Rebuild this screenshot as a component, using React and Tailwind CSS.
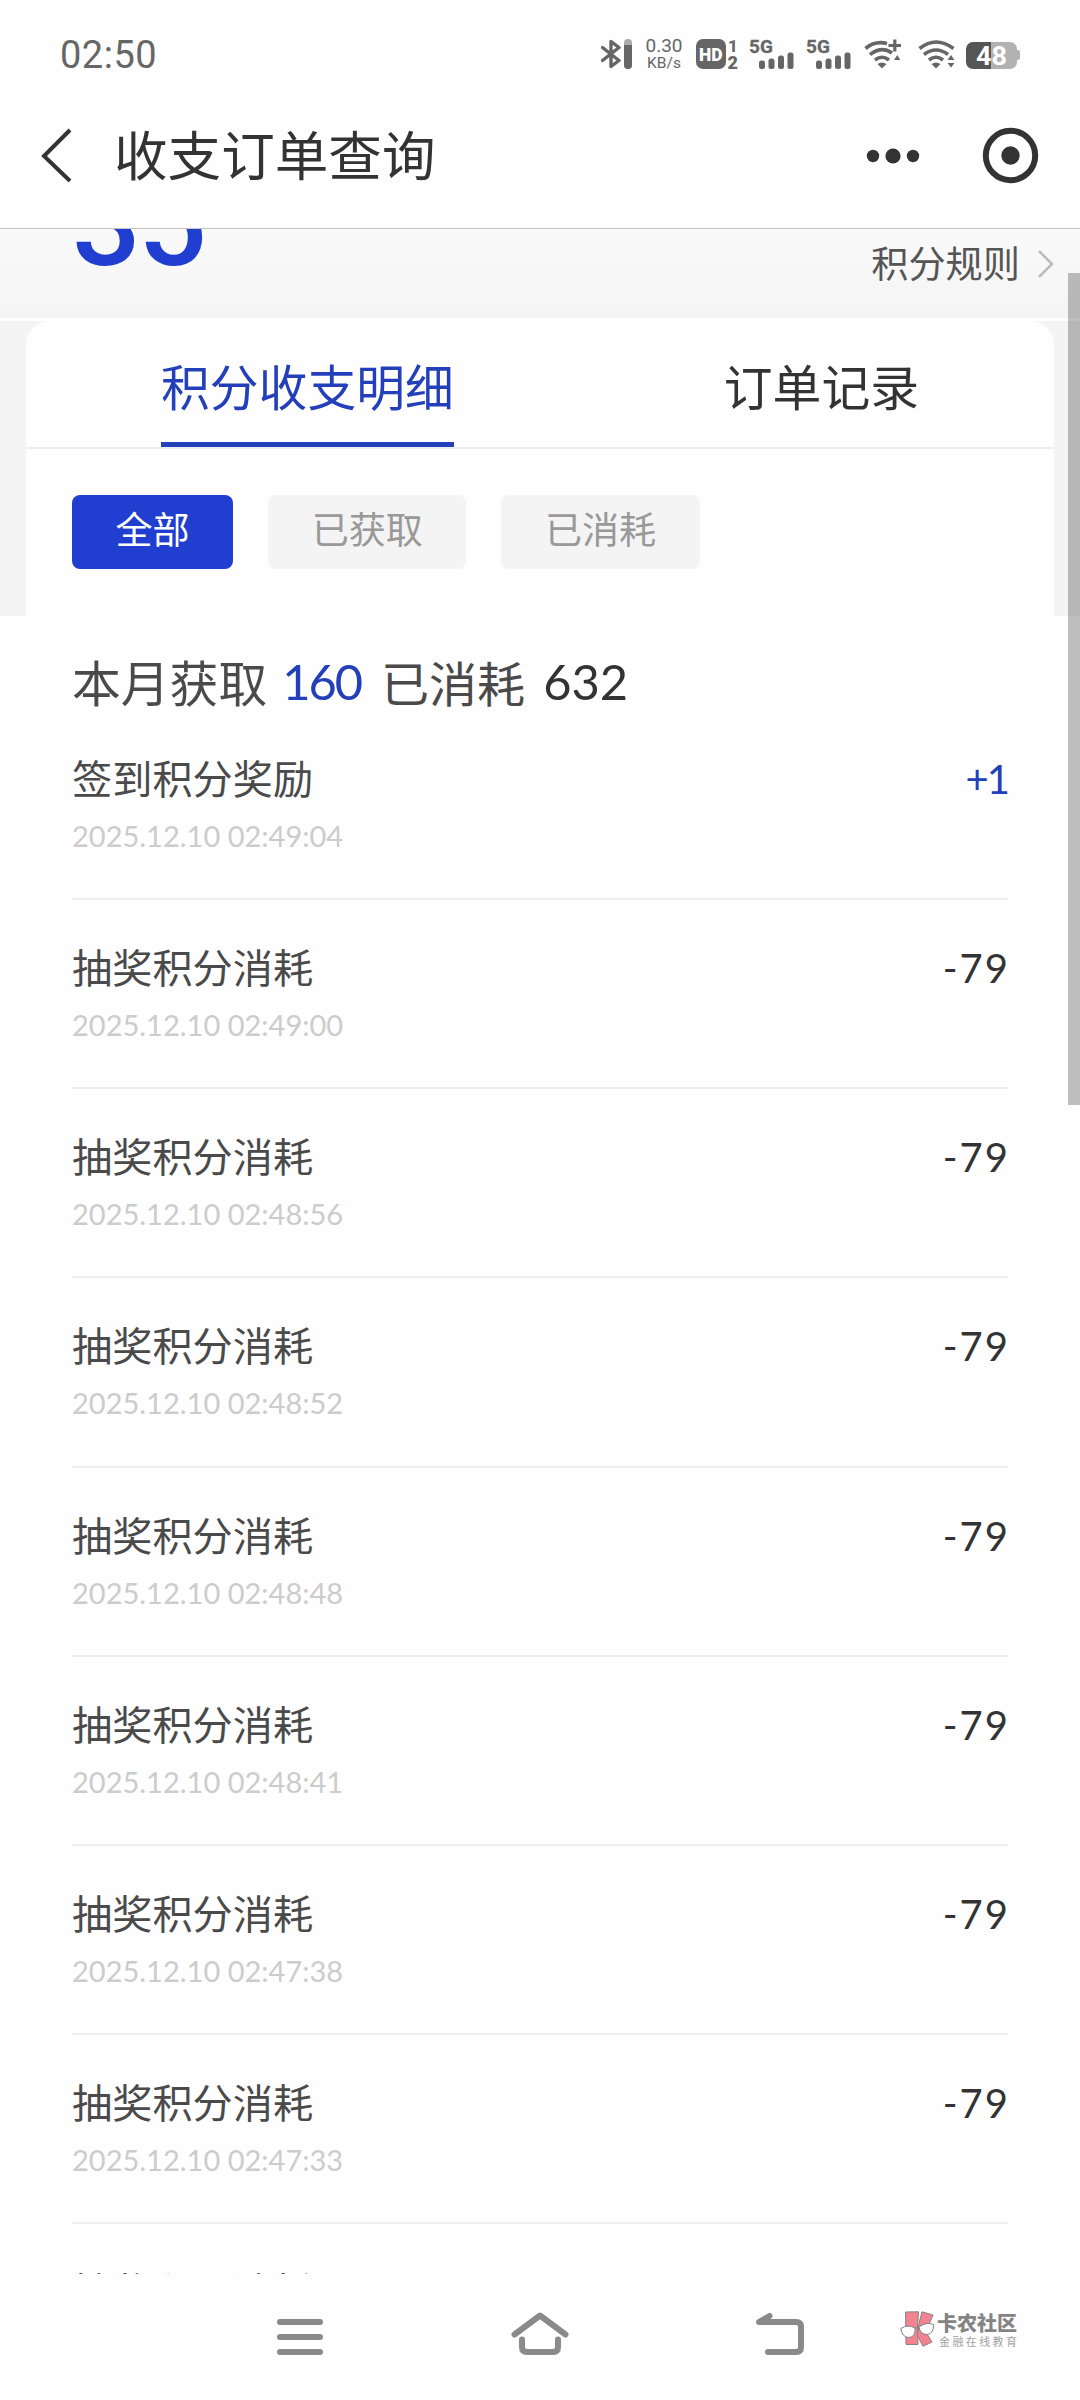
import React, { useState } from "react";

const records = [
  { id: 1, title: "签到积分奖励", time: "2025.12.10 02:49:04", amount: "+1" },
  { id: 2, title: "抽奖积分消耗", time: "2025.12.10 02:49:00", amount: "-79" },
  { id: 3, title: "抽奖积分消耗", time: "2025.12.10 02:48:56", amount: "-79" },
  { id: 4, title: "抽奖积分消耗", time: "2025.12.10 02:48:52", amount: "-79" },
  { id: 5, title: "抽奖积分消耗", time: "2025.12.10 02:48:48", amount: "-79" },
  { id: 6, title: "抽奖积分消耗", time: "2025.12.10 02:48:41", amount: "-79" },
  { id: 7, title: "抽奖积分消耗", time: "2025.12.10 02:47:38", amount: "-79" },
  { id: 8, title: "抽奖积分消耗", time: "2025.12.10 02:47:33", amount: "-79" },
  { id: 9, title: "抽奖积分消耗", time: "", amount: "" },
];

const tabs = ["积分收支明细", "订单记录"];
const filters = ["全部", "已获取", "已消耗"];

const Signal = () => (
  <svg className="overflow-visible" width="46" height="30" viewBox="0 0 46 30" fill="#666">
    <text x="0" y="14" fontSize="19" fontWeight="700" fontFamily="Roboto" textLength="24" stroke="#666" strokeWidth="0.3">
      5G
    </text>
    <rect x="10" y="21.5" width="6" height="8.5" rx="2.5" />
    <rect x="19.5" y="19.5" width="6" height="10.5" rx="2.5" />
    <rect x="29" y="16.5" width="6" height="13.5" rx="2.5" />
    <rect x="38.5" y="13.5" width="6" height="16.5" rx="2.5" />
  </svg>
);

const StatusBar = () => (
  <div className="h-[108px] flex items-center justify-between pl-[60px] pr-[60px] text-[#666]">
    <span className="pt-[2px] text-[38px] leading-none font-['Roboto'] tracking-[0.5px]">
      02:50
    </span>
    <div className="flex items-center">
      <svg width="31" height="30" viewBox="0 0 31 30">
        <path
          d="M1.5 8.5 L18 21.5 L10 27.5 V2.5 L18 8.5 L1.5 21.5"
          fill="none"
          stroke="#666"
          strokeWidth="3.4"
          strokeLinejoin="round"
          strokeLinecap="round"
        />
        <rect x="23" y="0" width="8" height="30" rx="4" fill="#aaa" />
        <path d="M23 6 H31 V26 A4 4 0 0 1 23 26 Z" fill="#666" />
      </svg>
      <div className="ml-[13px] w-[38px] h-[32px] flex flex-col items-center justify-between font-['Roboto'] whitespace-nowrap">
        <span className="text-[19px] leading-[16px]">0.30</span>
        <span className="text-[15.5px] leading-[13px]">KB/s</span>
      </div>
      <svg className="ml-[13px] overflow-visible" width="44" height="30" viewBox="0 0 44 30">
        <rect width="30" height="30" rx="7" fill="#666" />
        <text x="3" y="22" fontSize="19" fontWeight="900" fontFamily="Roboto" fill="#fff" textLength="23.5" lengthAdjust="spacingAndGlyphs">
          HD
        </text>
        <text x="32" y="12.5" fontSize="17" fontWeight="800" fontFamily="Roboto" fill="#666">
          1
        </text>
        <text x="31.5" y="30" fontSize="18" fontWeight="900" fontFamily="Roboto" fill="#666">
          2
        </text>
      </svg>
      <div className="ml-[9px] flex gap-[11px]">
        <Signal />
        <Signal />
      </div>
      <svg className="ml-3" width="38" height="30" viewBox="0 0 38 30" fill="none" stroke="#666" strokeWidth="3.6">
        <path d="M1.5 9.5 Q11 1.5 23 4.5" />
        <path d="M6 15.5 Q18 6.5 28 14" />
        <path d="M11 21 Q18 15.5 25 21" />
        <path d="M13.5 25 Q18 22 22.5 25 L18 29.5 Z" fill="#666" stroke="none" />
        <path d="M24.5 6.5 H37 M30.8 0.5 V12.5" strokeWidth="3.2" />
        <path d="M30 21 L33.2 16 L36.4 21 Z" fill="#666" stroke="none" />
      </svg>
      <svg className="ml-4" width="38" height="30" viewBox="0 0 38 30" fill="none" stroke="#666" strokeWidth="3.6">
        <path d="M1.5 9.5 Q18 -3.5 35.5 9.5" />
        <path d="M6 15.5 Q18 6.5 30 15.5" />
        <path d="M11 21 Q18 15.5 25 21" />
        <path d="M13.5 25 Q18 22 22.5 25 L18 29.5 Z" fill="#666" stroke="none" />
        <path d="M29.5 21 L33 16 L36.5 21 Z M29.5 24 L33 28.5 L36.5 24 Z" fill="#666" stroke="none" />
      </svg>
      <svg className="ml-[10px] mt-[3px] overflow-visible" width="54" height="27" viewBox="0 0 54 27">
        <path d="M25 0 H44 A7 7 0 0 1 51 7 V8 H52 A2 2 0 0 1 54 10 V16 A2 2 0 0 1 52 18 H51 V20 A7 7 0 0 1 44 27 H25 Z" fill="#b2b2b2" />
        <path d="M7 0 H25 V27 H7 A7 7 0 0 1 0 20 V7 A7 7 0 0 1 7 0 Z" fill="#555" />
        <text x="10" y="22.5" fontSize="25" fontWeight="700" fontFamily="Roboto" fill="#fff" textLength="31" lengthAdjust="spacingAndGlyphs">
          48
        </text>
      </svg>
    </div>
  </div>
);

const NavBar = () => (
  <div className="h-[121px] pb-[27px] flex items-center border-b border-[#c4c4c4] pl-[39px] pr-[41px]">
    <svg width="34" height="54" viewBox="0 0 34 54" fill="none" stroke="#333" strokeWidth="4">
      <path d="M31 2 L5 28 L31 53" />
    </svg>
    <h1 className="ml-[41px] -mt-[3px] text-[53.6px] leading-none text-[#333]">
      收支订单查询
    </h1>
    <svg className="ml-auto mt-[2px]" width="54" height="16" viewBox="0 0 54 16" fill="#333">
      <circle cx="7" cy="8" r="6.2" />
      <circle cx="27" cy="8" r="7.6" />
      <circle cx="47" cy="8" r="6.2" />
    </svg>
    <svg className="ml-[62px] mt-[2px]" width="57" height="57" viewBox="0 0 57 57">
      <circle cx="28.5" cy="28.5" r="24.7" fill="none" stroke="#333" strokeWidth="6" />
      <circle cx="28.5" cy="28.5" r="9.2" fill="#333" />
    </svg>
  </div>
);

const RecordRow = ({ record }) => (
  <li className="h-[189.15px] shrink-0 border-b-2 border-[#eee] flex justify-between">
    <div className="pt-[43px]">
      <p className="text-[40.2px] leading-[46px] text-[#4a4a4a]">
        {record.title}
      </p>
      {record.time && (
        <p className="mt-[19px] text-[29px] leading-[34px] text-[#ccc] font-['Lato']">
          {record.time}
        </p>
      )}
    </div>
    <span
      className={`pt-[45px] text-[40px] leading-[46px] font-['Lato'] ${
        record.amount.startsWith("+")
          ? "text-[#233fb9] tracking-[-2px]"
          : "text-[#333] tracking-[2px] -mr-[2px]"
      }`}
    >
      {record.amount}
    </span>
  </li>
);

const Watermark = () => (
  <div className="absolute left-[900px] top-[37px] flex opacity-90">
    <svg width="35" height="36" viewBox="0 0 35 36" stroke="#777" strokeWidth="1" strokeLinejoin="round">
      <path d="M5.5 1 L18.5 0.8 L17.5 17 L18 33.5 L6 33.5 Z" fill="#f27686" />
      <path d="M22 0.8 L33 4 L27 18 H17.5 Z" fill="#f27686" />
      <path d="M18 18 H24 L32 31 L23 35.3 L17.5 25 Z" fill="#f27686" />
      <path d="M0.8 17.5 Q8 13 15 17 Q16 26 8.5 26.5 Q2 26 0.8 17.5 Z" fill="#fff" />
      <path d="M19 16 Q26 10.5 33.5 13.5 Q34 23 26.5 23.5 Q20 23 19 16 Z" fill="#fff" />
      <path d="M15 17.5 Q17 14.5 19 16" fill="none" />
    </svg>
    <div className="ml-[2px] mt-[1px] whitespace-nowrap">
      <p className="text-[20px] leading-[22px] font-black text-[#777]">卡农社区</p>
      <p className="mt-[1px] ml-[2px] text-[11px] leading-[12px] tracking-[2.4px] text-[#999]">
        金融在线教育
      </p>
    </div>
  </div>
);

const SystemNav = () => (
  <div className="relative h-[126px] bg-[#fefefe] flex justify-between pl-[274px] pr-[273px] pt-[37px]">
    <svg width="52" height="46" viewBox="0 0 52 46" stroke="#8a8a8a" strokeWidth="6" strokeLinecap="round">
      <path d="M6 11 H46 M6 26 H46 M6 41 H46" />
    </svg>
    <svg className="mr-[2px]" width="60" height="46" viewBox="0 0 60 46" fill="none" stroke="#8a8a8a" strokeWidth="6" strokeLinecap="round" strokeLinejoin="round">
      <path d="M4.5 23.5 L30 4.5 L55.5 23.5" />
      <path d="M12 28.5 V36 Q12 41 17 41 H43 Q48 41 48 36 V28.5" />
    </svg>
    <svg width="52" height="46" viewBox="0 0 52 46" fill="none" stroke="#8a8a8a" strokeWidth="6" strokeLinecap="round" strokeLinejoin="round">
      <path d="M13 41 H41 Q46 41 46 36 V16 Q46 11 41 11 H4 L14.5 5" />
    </svg>
    <Watermark />
  </div>
);

const App = () => {
  const [tab, setTab] = useState(tabs[0]);
  const [filter, setFilter] = useState(filters[0]);

  return (
    <div className="relative w-[1080px] h-[2400px] overflow-hidden flex flex-col bg-[#fefefe] font-['Noto_Sans_CJK_SC',sans-serif]">
      <StatusBar />
      <NavBar />

      <main className="flex-1 min-h-0 overflow-hidden flex flex-col">
        <div className="h-[89px] shrink-0 overflow-hidden flex items-start justify-between pl-[72px] pr-[26px] bg-linear-to-b from-[#fafafa] to-[#f4f4f4]">
          <span className="-mt-[55px] text-[121px] leading-[100px] font-medium font-['Roboto'] tracking-[-2.5px] text-[#203fd0]">
            35
          </span>
          <div className="mt-[11px] flex items-center">
            <span className="text-[37.2px] leading-[44px] text-[#555]">积分规则</span>
            <svg className="ml-[17px] mt-[4px]" width="17" height="28" viewBox="0 0 17 28" fill="none" stroke="#bbb" strokeWidth="2.5">
              <path d="M2 1 L15 14 L2 27" />
            </svg>
          </div>
        </div>

        <div className="mt-[3px] h-[295px] shrink-0 px-[26px] bg-[#f4f4f4]">
          <div className="h-full rounded-t-[24px] bg-[#fefefe]">
            <div className="h-[128px] flex justify-around border-b-2 border-[#eee]">
              {tabs.map((item) => (
                <button
                  key={item}
                  onClick={() => setTab(item)}
                  className={`h-[126px] pt-[7px] pb-0 text-[48.8px] leading-none border-b-[5px] ${
                    item === tab
                      ? "text-[#233fb9] border-[#233fb9]"
                      : "text-[#333] border-transparent"
                  }`}
                >
                  {item}
                </button>
              ))}
            </div>
            <div className="mt-[46px] ml-[46px] flex gap-[35px]">
              {filters.map((item) => (
                <button
                  key={item}
                  onClick={() => setFilter(item)}
                  className={`h-[74px] px-[43.5px] rounded-lg text-[37.1px] leading-none pb-[6px] ${
                    item === filter
                      ? "bg-[#203ed0] text-white"
                      : "bg-[#f4f4f4] text-[#999]"
                  }`}
                >
                  {item}
                </button>
              ))}
            </div>
          </div>
        </div>

        <section className="px-[72px]">
          <div className="mt-[35px] h-[60px] flex items-center text-[48.8px] leading-none text-[#4a4a4a] whitespace-nowrap">
            <span>本月获取</span>
            <span className="ml-[15px] font-['Lato'] tracking-[-2px] text-[#233fb9]">160</span>
            <span className="ml-[20px] text-[48px]">已消耗</span>
            <span className="ml-[18px] font-['Lato'] text-[#333]">632</span>
          </div>
          <ul>
            {records.map((record) => (
              <RecordRow key={record.id} record={record} />
            ))}
          </ul>
        </section>
      </main>

      <SystemNav />
      <div className="absolute right-0 top-[273px] w-3 h-[832px] bg-black/25" />
    </div>
  );
};

export default App;
